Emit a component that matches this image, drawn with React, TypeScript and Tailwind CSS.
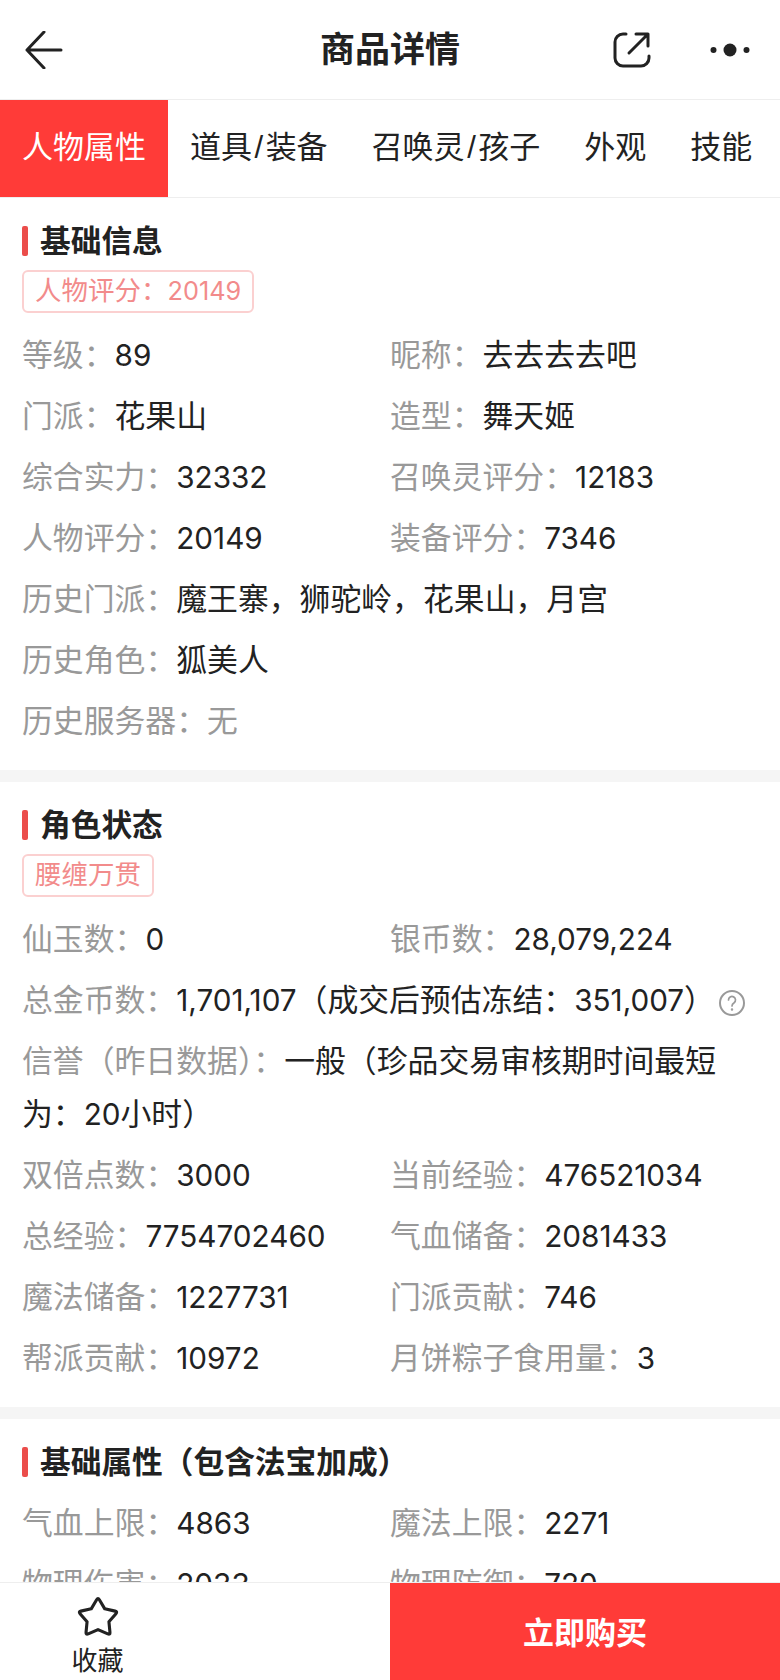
import { ReactNode } from "react";

const fontStack = "font-['Liberation_Sans','Noto_Sans_CJK_SC',sans-serif]";

const tabs = ["人物属性", "道具/装备", "召唤灵/孩子", "外观", "技能"];

function BackIcon() {
  return (
    <svg width="38" height="38" viewBox="0 0 38 38" fill="none" stroke="#222" strokeWidth="3" strokeLinecap="round" strokeLinejoin="round">
      <path d="M19 1 2 19l17 18M2 19h34" />
    </svg>
  );
}

function ShareIcon() {
  return (
    <svg width="38" height="38" viewBox="0 0 38 38" fill="none" stroke="#222" strokeWidth="3" strokeLinecap="round" strokeLinejoin="round">
      <path d="M13 3h-3a8 8 0 0 0-8 8v16a8 8 0 0 0 8 8h18a8 8 0 0 0 8-8v-2" />
      <path d="M23 3h12v12M35 3 16 22" />
    </svg>
  );
}

function DotsIcon() {
  return (
    <svg width="40" height="14" viewBox="0 0 40 14" fill="#222">
      <circle cx="3.5" cy="7" r="3" />
      <circle cx="20" cy="7" r="6.5" />
      <circle cx="36.5" cy="7" r="3" />
    </svg>
  );
}

function HelpIcon() {
  return (
    <svg className="ml-[4px] inline-block align-[-5px]" width="26" height="26" viewBox="0 0 26 26" fill="none" stroke="#999" strokeWidth="2" strokeLinecap="round">
      <circle cx="13" cy="13" r="12" />
      <path d="M9.5 10a3.5 3.5 0 1 1 5.6 2.8c-1.3.9-2.1 1.6-2.1 3.2" strokeWidth="1.7" />
      <circle cx="13" cy="19.5" r=".5" fill="#999" strokeWidth="1.5" />
    </svg>
  );
}

function StarIcon() {
  return (
    <svg width="46" height="46" viewBox="0 0 40 40" fill="none" stroke="#222" strokeWidth="2.7" strokeLinejoin="round">
      <path d="M18.8 5Q20 3 21.2 5L25.9 12.9L34.9 14.9Q37.1 15.4 35.6 17.1L29.5 24.1L30.4 33.3Q30.6 35.6 28.5 34.7L20 31L11.5 34.7Q9.4 35.6 9.6 33.3L10.5 24.1L4.4 17.1Q2.9 15.4 5.1 14.9L14.1 12.9Z" />
    </svg>
  );
}

// digits in the source app are proportional, Inter is the closest installed match
function Mixed({ text, digitClass }: { text: string; digitClass: string }) {
  return (
    <>
      {text.split(/([\d,]+)/).map((part, i) =>
        i % 2 === 1 ? (
          <span key={i} className={`font-['Inter',sans-serif] ${digitClass}`}>
            {part}
          </span>
        ) : (
          part
        )
      )}
    </>
  );
}

function SectionTitle({ children }: { children: ReactNode }) {
  return (
    <div className="flex h-[30px] items-center">
      <span className="h-[30px] w-[6px] rounded-[2px] bg-[#eb4d4b]" />
      <h2 className="ml-[12px] pt-[2px] text-[30.7px] font-bold leading-[30px] text-[#222]">{children}</h2>
    </div>
  );
}

function Tag({ text }: { text: string }) {
  return (
    <div className="mt-[14px] mb-[12px] h-[43px] w-fit rounded-[6px] border-2 border-[#fbd0d0] px-[11px] text-[26.5px] leading-[38px] text-[#f28b8b]">
      <Mixed text={text} digitClass="text-[25.3px]" />
    </div>
  );
}

function Item({ label, value, full, muted }: { label: string; value: string; full?: boolean; muted?: boolean }) {
  return (
    <div className={full ? "col-span-2 h-[61px] whitespace-nowrap" : "h-[61px] whitespace-nowrap"}>
      <span className="text-[#999]">{label}：</span>
      <span className={muted ? "text-[#999]" : "text-[#222]"}>
        <Mixed text={value} digitClass="text-[29.7px]" />
      </span>
    </div>
  );
}

function Grid({ children }: { children: ReactNode }) {
  return <div className="grid grid-cols-[368px_1fr] text-[30.85px] leading-[61px]">{children}</div>;
}

export default function App() {
  return (
    <div className={`flex h-[1680px] w-[780px] flex-col overflow-hidden bg-white ${fontStack}`}>
      {/* Nav bar */}
      <header className="flex h-[100px] shrink-0 items-center border-b border-[#eee] pl-[25px] pr-[30px]">
        <div className="flex-1">
          <BackIcon />
        </div>
        <h1 className="ml-[5px] pt-[2px] text-[35px] font-bold text-[#222]">商品详情</h1>
        <div className="flex flex-1 items-center justify-end gap-[59px]">
          <ShareIcon />
          <DotsIcon />
        </div>
      </header>

      {/* Tabs */}
      <nav className="flex h-[98px] shrink-0 overflow-hidden border-b border-[#eee] text-[31px] whitespace-nowrap">
        {tabs.map((tab, i) => {
          const [before, after] = tab.split("/");
          return (
            <div
              key={tab}
              className={
                i === 0
                  ? "flex h-[97px] items-center bg-[#ff3b38] px-[22px] text-white"
                  : "flex h-[97px] items-center px-[22px] text-[#222]"
              }
            >
              {before}
              {after && <span className="mx-[2.5px]">/</span>}
              {after}
            </div>
          );
        })}
      </nav>

      <main className="min-h-0 flex-1 overflow-hidden">
        <section className="px-[22px] pt-[28px] pb-[18px]">
          <SectionTitle>基础信息</SectionTitle>
          <Tag text="人物评分：20149" />
          <Grid>
            <Item label="等级" value="89" />
            <Item label="昵称" value="去去去去吧" />
            <Item label="门派" value="花果山" />
            <Item label="造型" value="舞天姬" />
            <Item label="综合实力" value="32332" />
            <Item label="召唤灵评分" value="12183" />
            <Item label="人物评分" value="20149" />
            <Item label="装备评分" value="7346" />
            <Item full label="历史门派" value="魔王寨，狮驼岭，花果山，月宫" />
            <Item full label="历史角色" value="狐美人" />
            <Item full muted label="历史服务器" value="无" />
          </Grid>
        </section>

        <div className="h-[12px] bg-[#f5f5f5]" />

        <section className="px-[22px] pt-[28px] pb-[18px]">
          <SectionTitle>角色状态</SectionTitle>
          <Tag text="腰缠万贯" />
          <Grid>
            <Item label="仙玉数" value="0" />
            <Item label="银币数" value="28,079,224" />
            <div className="col-span-2 h-[61px] whitespace-nowrap">
              <span className="text-[#999]">总金币数：</span>
              <span className="text-[#222]">
                <Mixed text="1,701,107（成交后预估冻结：351,007）" digitClass="text-[29.7px]" />
              </span>
              <HelpIcon />
            </div>
            <p className="col-span-2 pt-[5px] pb-[4px] leading-[52px]">
              <span className="text-[#999]">信誉（昨日数据）：</span>
              <span className="text-[#222]">
                <Mixed text="一般（珍品交易审核期时间最短为：20小时）" digitClass="text-[29.7px]" />
              </span>
            </p>
            <Item label="双倍点数" value="3000" />
            <Item label="当前经验" value="476521034" />
            <Item label="总经验" value="7754702460" />
            <Item label="气血储备" value="2081433" />
            <Item label="魔法储备" value="1227731" />
            <Item label="门派贡献" value="746" />
            <Item label="帮派贡献" value="10972" />
            <Item label="月饼粽子食用量" value="3" />
          </Grid>
        </section>

        <div className="h-[12px] bg-[#f5f5f5]" />

        <section className="px-[22px] pt-[28px]">
          <SectionTitle>基础属性（包含法宝加成）</SectionTitle>
          <div className="mt-[16px]">
            <Grid>
              <Item label="气血上限" value="4863" />
              <Item label="魔法上限" value="2271" />
              <Item label="物理伤害" value="2033" />
              <Item label="物理防御" value="720" />
            </Grid>
          </div>
        </section>
      </main>

      {/* Bottom bar */}
      <footer className="flex h-[98px] shrink-0 border-t border-[#eee] bg-white">
        <div className="w-[390px]">
          <div className="flex w-[195px] flex-col items-center pt-[11px]">
            <StarIcon />
            <span className="mt-[6px] text-[26px] leading-[30px] text-[#222]">收藏</span>
          </div>
        </div>
        <button className="flex-1 bg-[#ff3b38] pt-[6px] text-[31px] font-bold text-white">立即购买</button>
      </footer>
    </div>
  );
}
